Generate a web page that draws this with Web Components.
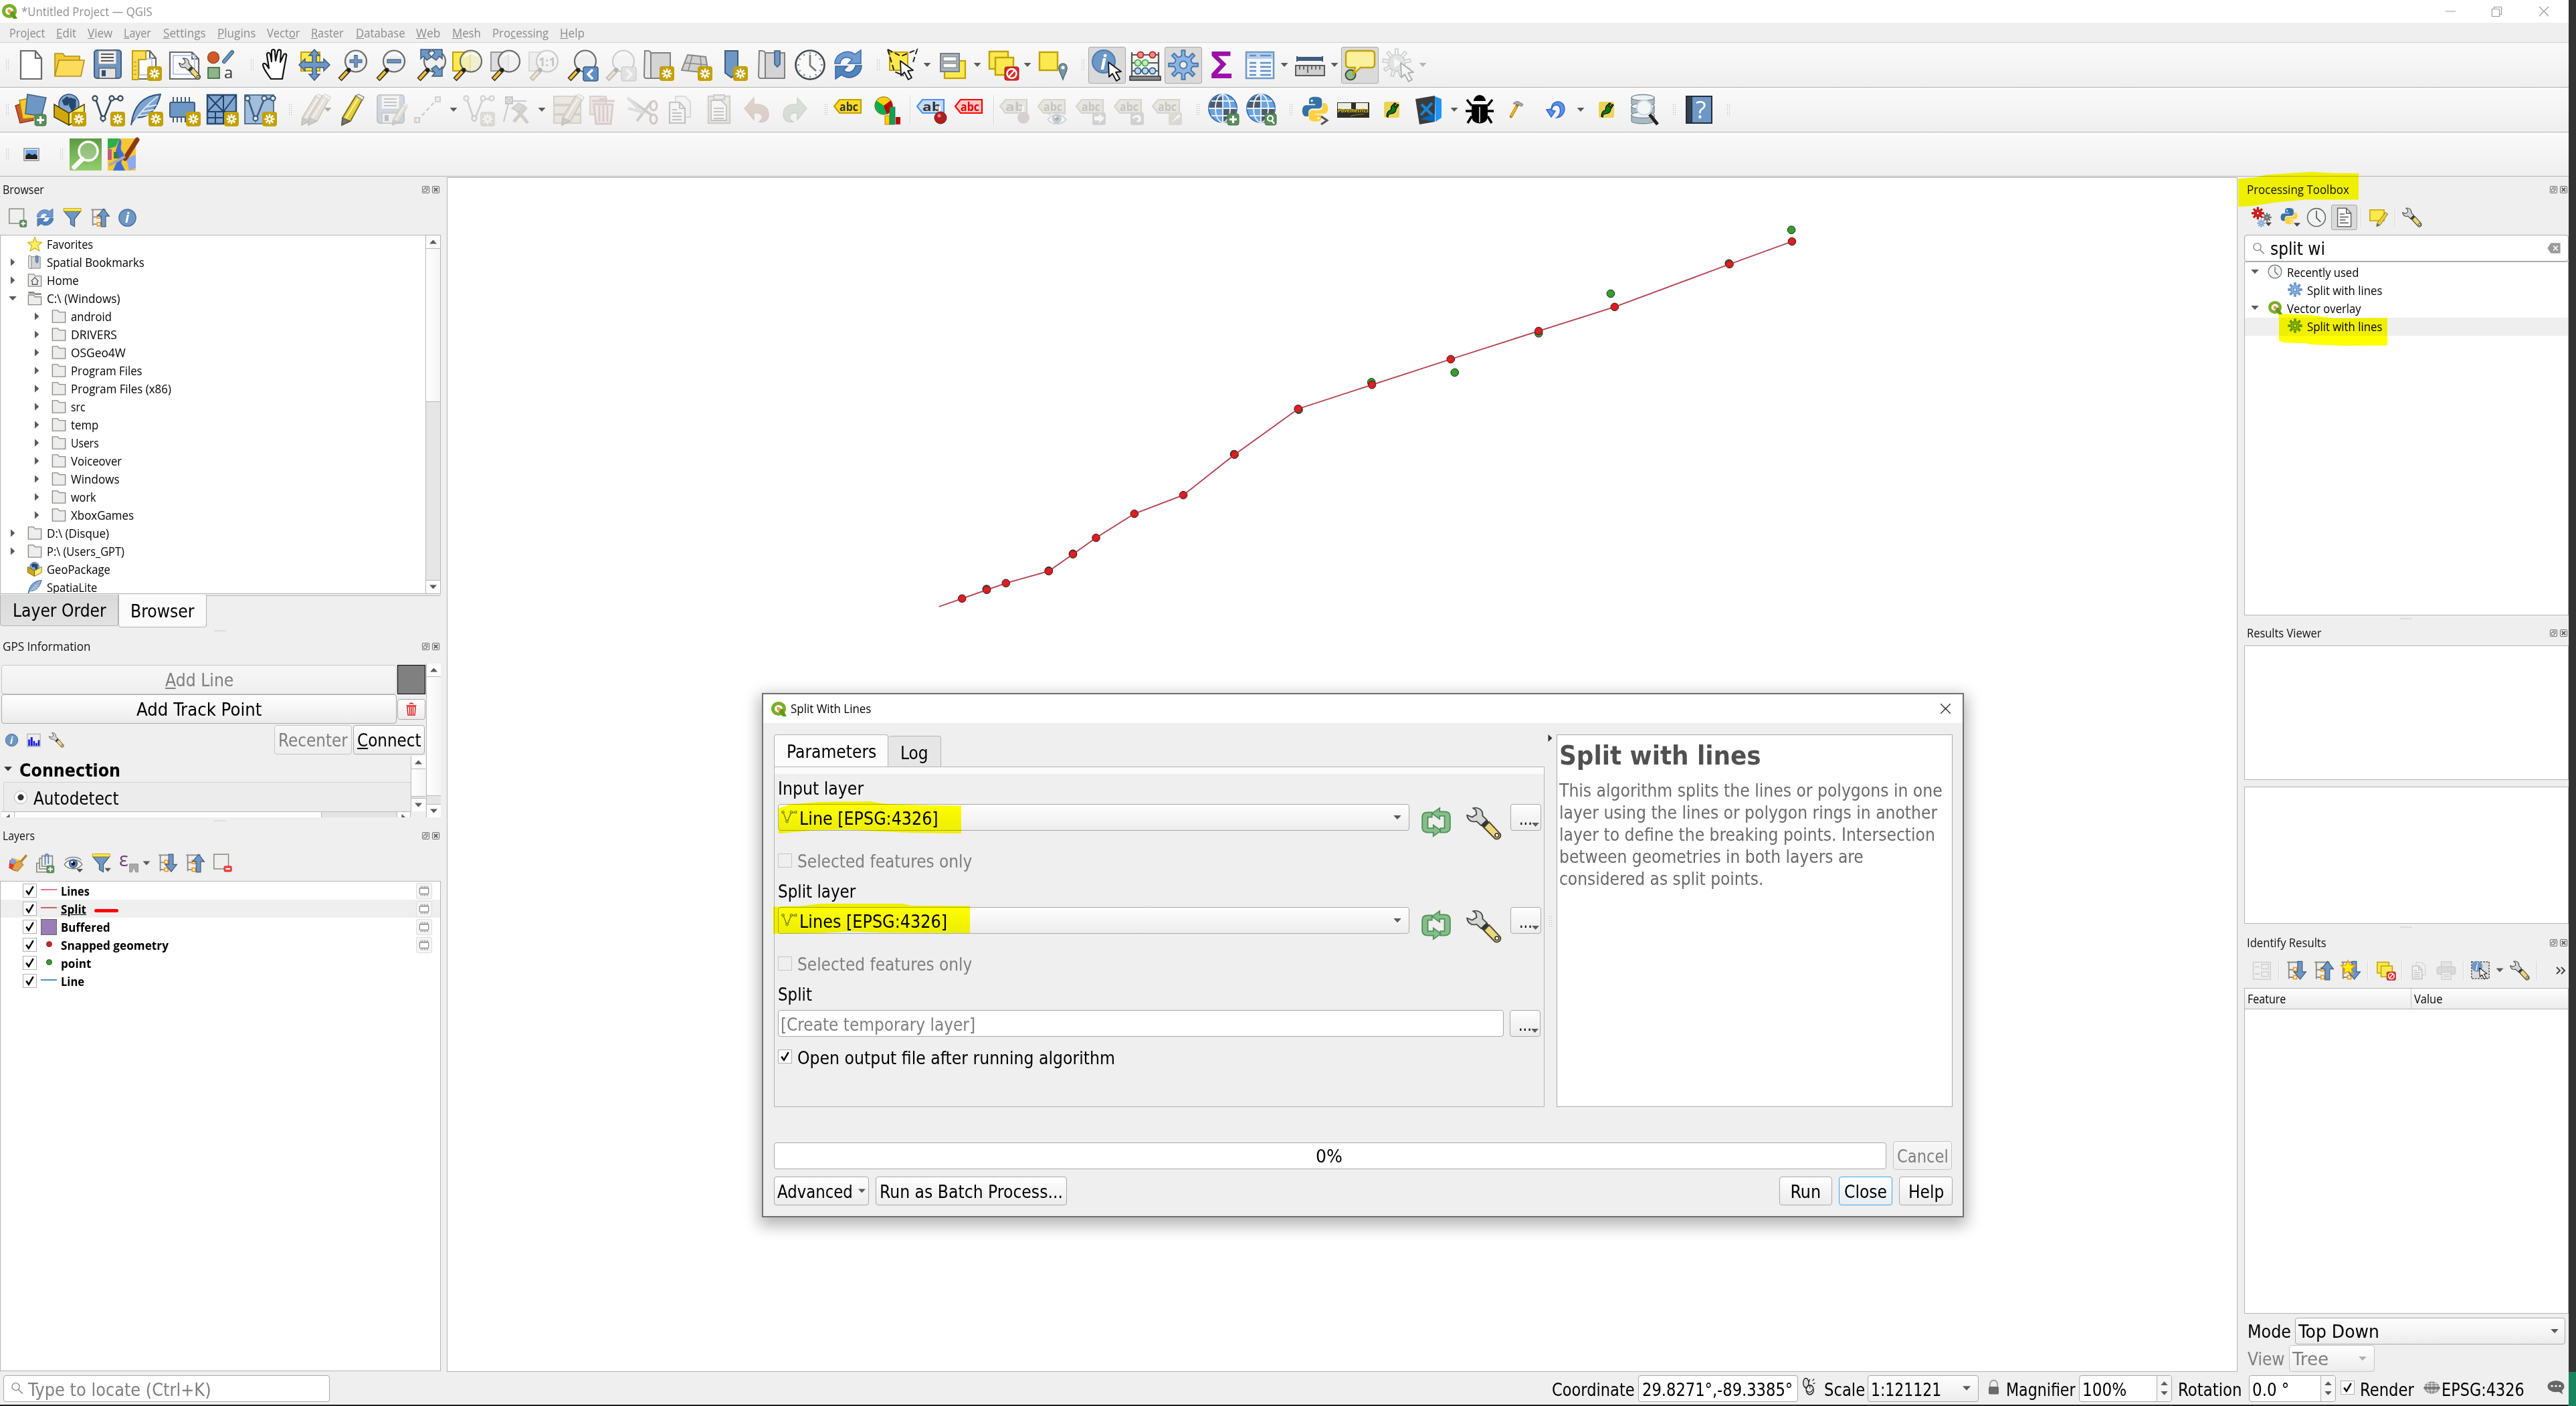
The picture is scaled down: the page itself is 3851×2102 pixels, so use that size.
<!DOCTYPE html>
<html lang="en">
<head>
<meta charset="utf-8">
<title>*Untitled Project — QGIS</title>
<style>
html,body{margin:0;padding:0;background:#efefef;overflow:hidden}
body{width:3851px;height:2102px;font-family:"Open Sans","Noto Sans",sans-serif;color:#000}
</style>
</head>
<body>
<qgis-window></qgis-window>
<script>
/* ---------- icon artwork, drawn on a 48 x 48 grid ---------- */
const P=(d,f='none',s='none',w=2,x='')=>`<path d="${d}" fill="${f}" stroke="${s}" stroke-width="${w}" ${x}/>`;
const R=(x,y,w,h,f='none',s='none',sw=2,rx=0)=>`<rect x="${x}" y="${y}" width="${w}" height="${h}" fill="${f}" stroke="${s}" stroke-width="${sw}" rx="${rx}"/>`;
const C=(x,y,r,f='none',s='none',w=2)=>`<circle cx="${x}" cy="${y}" r="${r}" fill="${f}" stroke="${s}" stroke-width="${w}"/>`;
const T=(t,x,y,s,f,x2='')=>`<text x="${x}" y="${y}" font-size="${s}" fill="${f}" font-family="Open Sans, sans-serif" ${x2}>${t}</text>`;
function gear(cx,cy,r,n,f,s,w=1.5,hole=.25){
  let d='';const a=Math.PI*2/n;
  for(let i=0;i<n;i++){
    const b=i*a-Math.PI/2;
    [[-.36,.6],[-.2,.66],[-.15,1],[.15,1],[.2,.66],[.36,.6]].forEach(([o,k],j)=>{
      d+=(i||j?'L':'M')+(cx+Math.cos(b+o*a)*r*k).toFixed(2)+' '+(cy+Math.sin(b+o*a)*r*k).toFixed(2);
    });
  }
  return P(d+'z',f,s,w,'stroke-linejoin="round"')+C(cx,cy,r*hole,'#eee',s,w);
}
const badge=(x=26,y=26,c='#c4a000')=>R(x,y,22,22,c,'none',0,4)+[0,45,90,135].map(a=>`<path d="M${x+11} ${y+3.5}v15" stroke="#fff" stroke-width="2.6" transform="rotate(${a} ${x+11} ${y+11})"/>`).join('')+C(x+11,y+11,2,c);
const plus=(x=30,y=31,s=17)=>R(x,y,s,s,'#5a8f5a','#427042',1,3)+P(`M${x+s/2} ${y+3}v${s-6}M${x+3} ${y+s/2}h${s-6}`,'none','#fff',3.2);
const lens=(f='#efefef')=>C(29,18.5,16,f,'#6a6a6a',2.2)+P('M19 31L5 46','none','#333',7)+P('M16 34L6 45','none','#fcc22f',4)+C(18.5,31.5,3,'#222')+P('M19 12c4-6 14-7 20-1','none','#fff',3,'opacity=".8"');
const cursor=(x,y,k=1)=>`<path transform="translate(${x} ${y}) scale(${k})" d="M0 0l1 22 5-5 6 11 5-3-6-10 8-1z" fill="#fff" stroke="#111" stroke-width="1.8" stroke-linejoin="round"/>`;
const refresh=P('M4 22C4 8 22-1 34 8l9-6v20H24l6-6c-8-6-17-3-18 6z','#6e9bd1','#3b6da8',1.5)+P('M44 25c0 15-18 23-30 14l-9 6V26h18l-6 6c8 6 16 2 18-7z','#5183c0','#34659f',1.5);
const infoC=C(24,24,21,'#6d97c4','#3e6594',2)+T('i',18,37,34,'#fff','font-style="italic" font-family="Liberation Serif" font-weight="bold"');
const wrench=P('M9 2c8-2 14 3 13 11l6 6-8 8-6-6C7 23 2 19 1 12l7 3 6-4-1-6z','#d3d7d3','#4a4a4a',1.8,'stroke-linejoin="round"')+P('M20 27l8-8 3 3-8 8z','#333')+P('M24 30l7-8 15 17c2 5-3 9-7 7z','#ecd77c','#4a4530',1.8)+C(41.5,41,2.6,'#fff','#333',1.5);
const page=(f='#fff')=>P('M8 3h22l9 11v31H8z',f,'#666',2.2)+P('M30 3v11h9','none','#666',2.2);
const vline=(c='#34495e')=>P('M6 8L17 40L30 8H42','none',c,2.6)+[[5,7],[17,37],[30,7],[43,7]].map(p=>C(p[0],p[1],3.6,'#efefef',c,2.2)).join('');
const feather=P('M2 47C5 20 18 3 46 1 42 18 32 36 11 36 7 38 4 42 2 47z','#7da3d0','#2d4f77',1.8)+P('M4 45C14 30 26 16 42 4M14 33l17-2M18 27l18-3M24 20l16-3','none','#dce8f5',1.8);
const earth=(x,y,r)=>C(x,y,r,'#86a9d2','#2b4f7c',1.5)+P(`M${x-r*.7} ${y-r*.4}l${r*.5}-${r*.4} ${r*.4} ${r*.3}-${r*.3} ${r*.6}-${r*.4} 0zM${x+r*.1} ${y-r*.7}l${r*.6} ${r*.2} 0 ${r*.8}-${r*.4} ${r*.4}-${r*.3}-${r*.6}z`,'#24466f');
const gpkg=earth(23,16,15)+P('M1 16L23 29V47L1 35z','#d1a70c','#4a3c00',1.5)+P('M23 29L46 16V35L23 47z','#fdf06a','#4a3c00',1.5);
const pencil=(x=0,y=0,c='#e7cf3a')=>`<g transform="translate(${x} ${y})">`+P('M8 36L28 3l10 5-18 33-13 6z',c,'#7a6c1a',1.8)+P('M28 3l4-2 8 4-2 5z','#eee','#888',1.3)+P('M8 36l11 5-12 6z','#777','#444',1)+P('M31 8L13 37','none','#fff7a0',2)+'</g>';
const globe=C(24,22,21,'#6aa3e0','#3a71b3',2)+P('M14 5h9v17H4c0-8 4-13 10-17zM25 23h19c-1 9-5 14-11 18l-8 1z','#444','none',0,'opacity=".75"')+P('M3 22h42M24 1v42M7 11h34M7 33h34','none','#e8f0f8',2)+`<ellipse cx="24" cy="22" rx="11" ry="21" fill="none" stroke="#e8f0f8" stroke-width="2"/>`;
const tag=(t,f,s,c)=>P('M11 9H43V29H11L3 19z',f,s,2.2)+T(t,11,26,18,c,'font-weight="bold" textLength="28" lengthAdjust="spacingAndGlyphs"');
const tree=P('M2 4H38M6 4V44M6 22h10M6 40h10','none','#8a8a85',3)+R(17,17,8,8,'#fff','#f79a1c',3)+R(17,36,8,8,'#fff','#f79a1c',3);
const up=P('M27 46V20h-9L33 2l14 18h-9V46z','#6d97c4','#3e5c7e',2);
const down=P('M27 2V27h-9L33 45l14-18h-9V2z','#6d97c4','#3e5c7e',2);
const funnel=P('M3 8H44L29 27V46L19 40V27z','#6d97c4','#3e5c7e',2)+R(2,1,43,7,'#fce94f','#c4a000',1.5);
const eye=P('M2 27C12 13 36 11 46 27 36 41 12 41 2 27z','#fff','#777',2.4)+C(24,25,10,'#5d8bc4','#31527c',2)+C(24,25,5,'#111')+C(21,21,2.5,'#fff')+P('M4 16C14 7 34 7 44 16','none','#888',2.4);
const clock=C(24,24,21.5,'#f2f4f4','#6a6a6a',2.6)+P('M24 8V25l10 10','none','#555',2.6);
const py=P('M23 2c-8 0-10 3-10 7v6h11v2H8c-5 0-7 5-7 10s2 10 7 10h4v-7c0-4 3-7 8-7h10c4 0 6-3 6-6V9c0-5-4-7-13-7z','#3673a5')+P('M25 46c8 0 10-3 10-7v-5H24v-2h16c5 0 7-5 7-9s-2-10-7-10h-3v7c0 4-3 6-7 6H19c-4 0-6 3-6 6v8c0 4 4 6 12 6z','#ffd13f')+C(18,9,2,'#fff')+C(30,40,2,'#fff');
const qlogo=P('M24 2a22 21 0 1 0 0 42 22 21 0 1 0 0-42zm0 10a12 11 0 1 1 0 22 12 11 0 1 1 0-22z','#7aae2b','none',0,'fill-rule="evenodd"')+P('M26 24l9-1 13 23H36L25 32z','#5f9a1d')+P('M19 17l10 3 1 8-7 3-4-6z','#f59a3c');
const fold=P('M3 4H20l5 6H45V44H3z','#ededed','#8a8a85',3);
const mapscroll=P('M12 6H42V44H8','#d4d4d4','#808080',2)+P('M4 3h5q4 0 4 5V44H6q-3 0-3-4z','#e8e8e8','#808080',2);
const note2=R(3,4,28,26,'#fce94f','#c4a000',2.4)+R(12,13,27,26,'#fce94f','#c4a000',2.4);
const noent=R(26,27,21,20,'#d92b2b','#a11',1,3)+C(36.5,37,7,'none','#fff',2.5)+P('M32 42l9-10','none','#fff',2.5);
const disk=R(4,2,40,42,'#6d97c4','#3e5c7e',2,4)+R(10,3,27,20,'#efefef','#888',1)+P('M14 8h19M14 13h19M14 18h19','none','#555',2.2)+R(11,29,25,15,'#e3e3e3','#555',1.2)+R(15,32,6,9,'#2f4f7a');
const plug=R(13,12,23,24,'#ecd457','none',0,3)+P('M17 34c0-6 3-9 6-9l1-6 5-5 2 1-3 4 2 1 3-4 2 1-4 6c0 5-4 7-7 7-3 0-5 1-5 5z','#0d7a1c','#000',1.2);
const I={
 none:'',page:page(),
 folder:P('M2 41V7h12l3 4h22v7','#f2c935','#b08d17',1.6)+P('M8 17H46l-5 24H2z','#fddc5b','#b08d17',1.6),
 save:disk,
 newlayout:page()+R(14,15,19,24,'none','#b7c9f5',2)+P('M4 3H24V16H13V46H4z','#fbdc55','#c4a000',2)+P('M6 20h4M6 26h4M6 32h4M6 38h4','none','#c4a000',1.6)+badge(),
 layouts:P('M3 5H36L46 15V45H3z','#fff','#666',2.2)+P('M36 5v10h10','none','#666',2)+R(8,10,32,28,'none','#b7c9f5',2)+`<g transform="translate(16 13) scale(.7)">${wrench}</g>`,
 style:C(10,13,8.5,'#d2592b','#a4451f',1.5)+P('M26 19L38 5','none','#3e5c7e',6,'stroke-linecap="round"')+P('M26 19L38 5','none','#6d97c4',3.5,'stroke-linecap="round"')+R(2,28,17,16,'#8db58d','#427042',1.8)+T('a',26,44,24,'#333'),
 hand:P('M14 45C9 37 3 31 2 24c0-3 4-3 6 1l3 4L8 9c0-4 4-4 5-1l2 11L15 4c0-4 5-4 5 0l1 14L24 4c1-4 5-3 5 0l-1 16 5-11c2-3 5-1 4 2L33 33l-2 12z','#fff','#111',2.2,'stroke-linejoin="round"'),
 pan:R(4,5,28,28,'#fce94f','#c4a000',2)+P('M24 1l8 9h-5v10h11v-5l9 9-9 9v-5H27v10h5l-8 9-8-9h5V28H10v5l-9-9 9-9v5h11V10h-5z','#6d97c4','#3e5c7e',1.5),
 zin:lens()+P('M29 9v19M19.500 18.500h19','none','#3e5c7e',5.500)+P('M29 10v17M20.500 18.500h17','none','#6d97c4',3.500),
 zout:lens()+R(19,16,20,5,'#6d97c4','#3e5c7e',1.2),
 zfull:lens()+[[0,0,1,1],[48,0,-1,1],[48,42,-1,-1]].map(a=>`<g transform="translate(${a[0]} ${a[1]}) scale(${a[2]} ${a[3]})">${P('M8 1H23L19 6l5 6-7 5-5-6-4 4z','#6d97c4','#3e5c7e',1.5)}</g>`).join(''),
 zsel:R(2,5,26,28,'#fce94f','#c4a000',2)+lens('rgba(240,238,200,.8)'),
 zlayer:R(2,5,26,28,'#ddd','#999',2)+lens('rgba(240,240,240,.8)'),
 znat:R(2,5,22,28,'#ddd','#999',2)+lens()+T('1:1',16,26,18,'#555','font-weight="bold"'),
 zlast:lens()+R(26,27,22,21,'#5f8fc4','#3e5c7e',1.5,3)+P('M40 31l-7 7 7 7','none','#fff',3.5),
 znext:lens()+R(26,27,22,21,'#bbb','#888',1.5,3)+P('M34 31l7 7-7 7','none','#fff',3.5),
 newmap:mapscroll+badge(),
 new3d:P('M11 9L38 12 42 36 2 32z','#cfcfcf','#888',2)+P('M18 10l-6 22M30 11l2 24M7 21l33 3','none','#888',1.5)+badge(),
 bookmark:P('M8 3H27V36L17.500 43 8 36z','#6d97c4','#3e5c7e',2)+badge(20),
 bookmarks:mapscroll+P('M27 3h8v20l-4 4-4-4z','#6d97c4','#3e5c7e',1.6),
 clock:C(24,24,21.5,'#fafbf8','#44484a',2.6)+[...Array(12)].map((_,i)=>`<path d="M24 5v3" stroke="#6d97c4" stroke-width="2" transform="rotate(${i*30} 24 24)"/>`).join('')+P('M24 9V25l9 8','none','#777',2.6),
 clockg:clock,refresh,
 selpoly:P('M5 5H32V32H5z','#fce94f','#c4a000',2)+P('M2 1l20 10L46 1 40 20M2 1L12 34l14 6','none','#222',2,'stroke-dasharray="8 4"')+cursor(21,18),
 selform:R(11,18,31,26,'#fce94f','#c4a000',2.200)+R(5,7,28,27,'#aab2bb','#777f88',2)+R(9,12,20,6,'#fff','#777',1)+R(9,22,20,6,'#fff','#777',1),
 desel:note2+noent,selloc:R(3,5,27,27,'#fce94f','#c4a000',2.4)+P('M38 46c-3-9-7-14-6-18a6 6 0 0 1 12 0c1 4-3 9-6 18z','#7a96a5','#546e7a',1.5)+C(38,28,2.5,'#fff'),
 identify:C(19,19,17,'#6d97c4','#4f7cb0',2)+T('i',14,31,30,'#fff','font-style="italic" font-family="Liberation Serif" font-weight="bold"')+cursor(26,20),
 abacus:P('M4 5V42M44 5V42M4 9H44M4 21H44M4 33H44','none','#555',2.2)+R(1,41,46,6,'#888','#333',1.5)+[[17,9,'#ef8a8a','#b22'],[35,9,'#ef8a8a','#b22'],[13,21,'#c3ecc3','#4a4'],[24,21,'#c3ecc3','#4a4'],[13,33,'#b7dcf2','#357'],[24,33,'#b7dcf2','#357'],[35,33,'#b7dcf2','#357']].map(a=>C(a[0],a[1],4.6,a[2],a[3],1.8)).join(''),
 gear:gear(24,24,22,8,'#8db4e2','#4477b3',2),
 sigma:T('Σ',6,44,56,'#9b10a8','font-family="Liberation Serif" font-weight="bold" textLength="34" lengthAdjust="spacingAndGlyphs"'),
 table:R(3,5,41,39,'#f3f7fb','#6d97c4',2.500)+R(4,6,39,9,'#b7d0ec')+P('M8 10h10M24 10h16M8 21h10M24 21h16M8 27h10M24 27h16M8 33h10M24 33h16M8 39h10M24 39h16','none','#5f8fc8',2.600),
 measure:P('M5 11v8M43 11v8','none','#34526f',2)+R(5,12,38,6,'#3e5c7e')+R(3,25,43,15,'#cfcfcf','#5a5a5a',2)+P('M9 25v6M15 25v6M21 25v11M27 25v6M33 25v6M39 25v6','none','#5a5a5a',1.8),
 tip:C(10,39,7.5,'#8cc08c','#444',2)+P('M8 3H41q5 0 5 5V23q0 5-5 5H25L14 38 17 28H8q-5 0-5-5V8q0-5 5-5z','#fbf09b','#c4a000',2.4),
 gearplay:gear(21,21,21,9,'#fff','#777',1.8)+C(21,21,12,'#b5bcc2','#888',1.5)+P('M17 14l11 7-11 7z','#fff')+cursor(27,21),
 opends:P('M1 18L20 12 28 40 8 44z','#d2592b','#8a3a1c',1.5)+P('M7 10L26 6 32 36 12 38z','#f2ca30','#a88510',1.500)+P('M19 1L47 6 40 34 16 30z','#6d97c4','#3e5c7e',1.5)+plus(30,31),
 gpkg:gpkg+badge(27,27),gpkgs:gpkg,newshp:vline()+badge(28,27),feather,newspl:feather+badge(28,27),
 mem:P('M8 5v38M14 5v38M20 5v38M26 5v38M32 5v38','none','#3e5c7e',2)+R(3,13,37,22,'#6d97c4','#3e5c7e',2,2)+badge(27,27),
 mesh:R(2,2,43,43,'#7fa5d0','#2b4a70',2.5)+P('M2 27H45M26 2V45M2 2L26 27M26 2L2 27M45 2L26 27M14 27V45M2 36H26','none','#20406a',2)+badge(27,27),
 gpx:R(1,2,43,43,'#a3bedd','#3e5c7e',1.6)+vline('#3e5c7e')+badge(27,27),
 pencils:pencil(-4,0,'#c9a9a0')+pencil(6,0,'#c9a9a0'),pencil:pencil(1,0),
 saveedit:disk+`<g transform="translate(22 14) scale(.7)">${pencil(0,0,'#c9a9a0')}</g>`,
 dline:P('M8 40L36 10','none','#777',2.5,'stroke-dasharray="6 4"')+R(4,36,7,7,'#ddd','#777',2)+R(35,5,7,7,'#ddd','#777',2),
 addf:vline('#777')+badge(26,27,'#a9a184'),
 vertex:R(5,5,10,10,'#ddd','#555',2)+P('M6 6l8 8M14 6l-8 8M15 11H36M9 15L2 42','none','#666',2)+P('M17 42L36 20M20 22L38 44','none','#8a7f60',5)+P('M14 22l10-8 9 4-8 9z','#999','#666',1.5),
 multi:R(3,4,40,12,'#d5c9a2','#8f8458',2)+R(3,18,40,12,'#d5c9a2','#8f8458',2)+R(3,32,40,12,'#d5c9a2','#8f8458',2)+pencil(8,0,'#c9a9a0'),
 trash:R(3,4,24,27,'#d5c9a2','#8f8458',2)+P('M9 16H37L34 45H12z','#efd5d5','#c26a6a',3)+P('M6 11H40M17 18V42M23 18V42M29 18V42M17 8h12','none','#c26a6a',3),
 cut:P('M4 8L38 32M16 41L38 12','none','#777',4)+P('M2 6L20 24M3 22L26 28','none','#aaa',4)+`<ellipse cx="41" cy="18" rx="5" ry="7" fill="none" stroke="#a55" stroke-width="3"/><ellipse cx="41" cy="38" rx="5" ry="7" fill="none" stroke="#a55" stroke-width="3"/>`,
 copy:P('M16 4H30L38 12V35H16z','#eee','#999',2)+P('M7 13H22L30 22V44H7z','#f6f6f6','#555',2.2)+P('M22 13v9h8M11 24h7M11 29h14M11 34h14M11 39h14','none','#555',2),
 paste:R(7,4,32,40,'#d8cdb8','#8a7a60',2.5)+R(15,2,16,7,'#ccc','#666',2)+P('M11 10H26L34 18V40H11z','#f6f6f6','#555',1.8)+P('M15 22h15M15 27h15M15 32h15M15 37h15','none','#555',2),
 undo:P('M4 22L18 6V16C34 15 40 22 40 32 40 40 32 44 26 42 32 38 34 28 18 29V39z','#c07b5b','#a3684a',1.4),
 redo:P('M40 22L26 6V16C10 15 5 22 5 32 5 40 13 44 20 42 12 38 12 28 26 29V39z','#8fae8f','#6f8f6f',1.4),
 abc:tag('abc','#fbdc1f','#c4a000','#333'),
 diagram:C(18,18,13,'#00b050','#333',0)+P('M18 18V5A13 13 0 0 1 30 13z M18 18L7 10A13 13 0 0 1 18 5z','#ffd000')+P('M18 18l11-8a14 14 0 0 1-6 21z','#c00000')+C(18,18,13.3,'none','#8a6a00',1)+R(20,33,7,13,'#ffd000','#d08000',1)+R(27,20,8,26,'#00a650','#555',.8)+R(36,35,7,11,'#c00000'),
 abpin:tag('ab','#c5dcf7','#4a90f0','#333')+P('M37 18v14','none','#bbb',5)+P('M37 18v14','none','#fff',3)+C(38,36,9,'#b01f1f','#7a1111',1)+C(36,33,2.5,'#e88'),
 abcred:tag('abc','#ffc7c7','#ff0000','#e00'),
 labpin:tag('ab','#c9c49a','#8f8a62','#555')+P('M37 18v14','none','#fff',3)+C(38,36,9,'#a08080'),
 labeye:tag('abc','#c9c49a','#8f8a62','#555')+`<g transform="translate(16 22) scale(.62)">${eye}</g>`,
 labmove:tag('abc','#c9c49a','#8f8a62','#555')+R(27,28,20,19,'#888','none',0,3)+P('M30 34h7v-4l8 7-8 7v-4h-7z','#fff'),
 labrot:tag('abc','#c9c49a','#8f8a62','#555')+R(27,28,20,19,'#888','none',0,3)+P('M40 42c6-6-6-12-9-5M37 33c5 0 5 6 0 9','none','#fff',3),
 labedit:tag('abc','#c9c49a','#8f8a62','#555')+R(27,28,20,19,'#a9a184','none',0,3)+P('M30 44l12-13 3 3z','#fff'),
 globeadd:globe+plus(31,30),globeq:globe+R(30,30,17,17,'#5a8f5a','#427042',1,3)+C(38,37,4,'none','#fff',2.2)+P('M40 40l4 5','none','#fff',2.2),
 python:`<g transform="translate(3 3) scale(.84)">${py}</g>`+P('M32 34l9 6-9 6','none','#555',3),pythons:py,
 pave:R(0,13,48,23,'#2d2d2a')+R(1,14,20,9,'#e8efe0')+R(28,14,18,9,'#f4efe0')+T('Pavemetrics',1,28,9,'#e6c51a','font-weight="bold" font-style="italic" textLength="46" lengthAdjust="spacingAndGlyphs"')+P('M20 34c8-4 16-2 20-4','none','#8a7a22',1.2),
 plug,
 vscode:P('M3 8L32 3V42L9 46z','#3c3c3c')+P('M32 4l10 4V36L33 42z','#2196f3')+P('M12 16L30 34M28 14L11 32','none','#1488d8',4)+P('M10 38L32 30V42z','#0b66b8'),
 bug:P('M15 11a9 9 0 0 1 18 0z','#000')+P('M12 16H36V34c0 14-24 14-24 0z','#000')+P('M24 20V43','none','#fff',1.5)+P('M12 18L5 9M36 18l7-9M12 26H3M36 26h9M12 34L6 44M36 34l6 10','none','#000',3.5),
 hammer:P('M16 34L26 16','none','#a8730c',4.5,'stroke-linecap="round"')+P('M16 34L24 19','none','#f5b31a',3)+P('M19 15c3-4 8-4 10-2l5 3-2 3-7-3z','#aaa','#777',1),
 undoblue:P('M11 24l7 11 6-9-5-1c-1-8 10-11 12-4 2 7-1 12-5 15 9-1 14-10 11-18-4-9-18-8-19 5z','#5b93e6','#2f66c4',1.5),
 db:[6,19,32].map(y=>P(`M6 ${y}V${y+9}C8 ${y+14} 38 ${y+14} 40 ${y+9}V${y}z`,'#a9bac6','#7a8b97',1.3)+`<ellipse cx="23" cy="${y}" rx="17" ry="4.500" fill="#eef3f6" stroke="#7a8b97" stroke-width="1.300"/>`).join('')+C(25,21,11,'#f3f6f8','#cfd8dd',2)+P('M33 31l12 15','none','#222',5),
 help:R(4,3,40,42,'#232b38','none')+R(6,5,7,38,'#324250')+R(14,5,28,38,'#6d97c4')+T('?',19,37,36,'#fff','font-family="Liberation Serif"'),
 pic:R(13,15,22,18,'#fff','#888',1.5)+R(15,17,18,10,'#6aa5e8')+P('M15 31V26l5-4 5 3 4-2 4 3v5z','#222'),
 green:`<defs><linearGradient id="gg" x1="0" y1="0" x2="0" y2="1"><stop offset="0" stop-color="#5d9b43"/><stop offset="1" stop-color="#93cf6e"/></linearGradient></defs>`+R(0,0,48,48,'url(#gg)')+C(28,19,14,'rgba(255,255,255,.25)','#fff',3.5)+P('M19 31L7 43','none','#fff',7,'stroke-linecap="round"'),
 osm:R(0,0,42,48,'#f7c733')+P('M0 0H18L12 12 0 16z','#2fae4a')+P('M18 0c6 6-2 14 4 20 5 5 0 12-2 16L26 48H8L16 30 12 18z','#3f6fd8')+R(0,16,6,16,'#c8587a')+R(9,20,7,10,'#3a7a5a')+P('M28 30l14-6v20l-10 4z','#8fa8ee')+P('M44 2L26 30','none','#8b3a12',7,'stroke-linecap="round"')+P('M26 27L2 40','none','#aaa',4),
 newsq:R(3,2,36,36,'#efefef','#85857f',2.4)+plus(29,30,17),refs:refresh,funnel,funnelv:funnel+P('M32 36h16l-8 9z','#555'),
 coll:tree+up,exp:tree+down,info:infoC,
 star:P('M24 1l6 16 17 1-13 11 5 17-15-9-15 9 5-17L1 18l17-1z','#fdf25c','#c9a40a',2.2),
 bmk:mapscroll+P('M27 3h8v20l-4 4-4-4z','#6d97c4','#3e5c7e',1.6),
 home:P('M3 4H20l5 6H45V44H3z','#ededed','#8a8a85',3)+P('M12 27L24 15 36 27M16 26V38H32V26','none','#444',2.6),
 drive:P('M3 2H20l5 5H45V13H25l-4-4H3z','#8a8a85')+P('M3 13H20l5 6H45V45H3z','#ededed','#8a8a85',3),
 fold,tree,
 chart:R(2,3,44,43,'#ededf2','#999',2)+R(5,22,6,22,'#1a1ae0')+R(13,14,7,30,'#1a1ae0')+R(22,27,6,17,'#1a1ae0')+R(30,34,6,10,'#1a1ae0')+R(38,24,6,20,'#1a1ae0'),
 wrench,
 rtrash:P('M9 16H39L36 46H12z','none','#d00',3)+P('M6 11H42M18 18V44M24 18V44M30 18V44M17 6q7-6 14 0','none','#d00',3),
 brush:P('M4 16l22 6-8 22-16-8z','#e33')+P('M10 10l20 6-4 14-20-6z','#fc3')+P('M9 11l-5 12 14 4 3-10z','#7aa0ee')+P('M16 24l14-6 8 10-14 16-14-4z','#e0a24a','#9a6a20',1.5)+P('M32 20L46 4','none','#b8862a',6),
 group:P('M10 24H3V46H32M16 12H10V38H38V34M16 6H42V32H16z','none','#85857f',2.6)+P('M24 28V6c0-6 8-6 8 0V26','none','#4f7cb0',2.8)+plus(28,30,18),
 eye:eye+P('M32 38h16l-8 9z','#555'),
 eps:T('ε',0,31,48,'#6a3a78','font-family="Liberation Serif"')+P('M26 46V26H47V46H41L37 34H36L32 46z','#aaa','#888',1.5),
 remsq:R(3,2,36,36,'#efefef','#85857f',2.4)+R(28,31,19,14,'#e44','#c22',1,3)+P('M32 38h11','none','#fff',3.4),
 gears:gear(15,14,14,8,'#d22','#b11',2)+gear(37,24,10,8,'#777','#666',1.5)+gear(23,38,9,8,'#8db4e2','#7aa4d8',1.5)+P('M33 36h15l-7.500 9z','#444'),
 pyv:`<g transform="scale(.88)">${py}</g>`+P('M32 37h16l-8 9z','#444'),
 doc:P('M9 2H30L41 14V46H9z','#fff','#666',2.4)+P('M30 2v12h11M14 16h12M14 23h21M14 30h14M14 37h21','none','#555',2.4),
 notep:R(3,6,34,26,'#fce94f','#c4a000',2.4)+P('M20 38L40 12l6 4-18 26-9 4z','#e7cf3a','#8a7a20',1.6)+P('M20 38l7 4-8 4z','#666'),
 qlogo,gearb:gear(24,24,22,8,'#8db4e2','#5f8fc8',3.2),
 form:R(4,4,41,41,'none','#888',2.5)+R(24,9,16,11,'none','#888',2.5)+R(24,27,16,11,'none','#888',2.5)+P('M8 15h11M8 32h11','none','#888',3),
 starexp:tree+down+P('M18 0l5 11 12 1-9 8 3 12-11-6-10 6 2-12L1 12l12-1z','#fff200','#f59a1c',2.5),
 print:R(12,3,24,14,'#ccc','#777',2)+R(2,15,44,18,'#aaa','#777',2,5)+R(13,28,22,17,'#eee','#777',2)+P('M17 34h14M17 39h14','none','#777',2),
 infosel:R(3,3,42,40,'#dcdcdc','#444',2.4).replace('/>',' stroke-dasharray="4 3"/>')+C(16,14,13,'#6d97c4')+T('i',12,24,26,'#fff','font-style="italic" font-family="Liberation Serif"')+cursor(22,18,.95),
 mag:C(19,18,14,'none','#888',3.4)+P('M29 29L45 44','none','#888',4),
 clear:P('M1 24L13 7H47V41H13z','#9a9a9a')+P('M22 16l16 16M38 16L22 32','none','#fff',3.4),
 vl:vline('#6b7075'),
 iter:P('M18 8H12q-8 0-8 8V33q0 8 8 8H20V47L31 38 20 29v5H12V16H18z','#86bd8a','#4f9157',1.8)+P('M30 41H36q8 0 8-8V15q0-8-8-8H29V1L18 10 29 19V14H36V34H30z','#86bd8a','#4f9157',1.8),
 lock:P('M10 22V14a14 13 0 0 1 28 0V22','none','#999',4)+R(5,22,38,25,'#6a6a6a','none',0,4),
 mouse:P('M10 8L40 42M30 4L16 30','none','#222',3)+`<ellipse cx="17" cy="14" rx="9" ry="13" fill="#ddd" stroke="#222" stroke-width="3"/><ellipse cx="30" cy="33" rx="12" ry="13" fill="#eee" stroke="#222" stroke-width="3"/>`+P('M18 34c6 8 16 8 22-4M30 20v9M38 8l6-5M40 16l7-2','none','#222',2.5),
 crs:`<ellipse cx="24" cy="24" rx="22" ry="21" fill="#8c8c8c"/>`+P('M1 18h46M5 10h38M6 34h36M24 4v40M15 4q-8 20 2 40M33 4q8 20-2 40','none','#efefef',1.8)+P('M0 25h48','none','#666',4),
 bubble:`<ellipse cx="24" cy="21" rx="23" ry="19" fill="#666"/>`+P('M26 34l17 13-4-19z','#666')+C(13,20,3,'#fff')+C(24,20,3,'#fff')+C(35,20,3,'#fff'),
 chip:R(8,14,32,20,'#fff','#777',2.6,2)+P('M13 14V6M19 14V6M25 14V6M31 14V6M37 14V6M13 34v8M19 34v8M25 34v8M31 34v8M37 34v8','none','#777',2),
 float:R(2,2,44,44,'none','#707070',4.500,7)+R(19,11,17,17,'none','#707070',4)+R(11,20,17,17,'#efefef','#707070',4),
 close:R(2,2,44,44,'none','#707070',4.500,7)+P('M12 12L36 36M36 12L12 36','none','#606060',8)
};
/* ---------- base class ---------- */
class El extends HTMLElement{
  constructor(){super();this.attachShadow({mode:'open'});}
  a(n,d=''){return this.hasAttribute(n)?this.getAttribute(n):d;}
  connectedCallback(){if(this.done)return;this.done=true;
    this.shadowRoot.innerHTML=`<style>:host{display:block;box-sizing:border-box}*{box-sizing:border-box}${this.css()}</style>${this.html()}`;
    this.after();}
  css(){return''} html(){return'<slot></slot>'} after(){}
}
const def=(n,c)=>customElements.define(n,c);

/* one line of text, set to an exact advance width */
def('fit-text',class extends El{
  css(){const t=this.a('f')==='t';
    return `:host{display:block;flex:none;white-space:nowrap;width:${this.a('w')}px;color:${this.a('c','inherit')};font:${this.hasAttribute('b')?'bold ':''}${this.a('s',t?26.5:18)}px/1.2 ${t?'"DejaVu Sans Condensed","DejaVu Sans"':'"Open Sans","Noto Sans"'},sans-serif;font-stretch:${t?'condensed':'normal'}}
    span{display:inline-block;transform-origin:0 50%}`}
  html(){return'<span><slot></slot></span>'}
  after(){const s=this.shadowRoot.querySelector('span'),n=s.offsetWidth,w=+this.a('w'),dy=this.a('dy',this.a('f')==='t'?1:0);if(n&&w)s.style.transform=`translateY(${dy}px) scaleX(${(w/n).toFixed(4)})`;}
});
const S=(t,w,o='')=>`<fit-text w="${w}" ${o}>${t}</fit-text>`;
const TT=(t,w,o='')=>`<fit-text f="t" w="${w}" ${o}>${t}</fit-text>`;

def('q-icon',class extends El{
  css(){const z=this.a('z',48);return `:host{flex:none;width:${z}px;height:${this.a('h',z)}px;${this.hasAttribute('off')?'opacity:.3;filter:saturate(.55);':''}}svg{display:block;width:100%;height:100%;overflow:visible}`}
  html(){return `<svg viewBox="0 0 48 48" preserveAspectRatio="none">${I[this.a('n')]||''}</svg>`}
});
def('drop-arrow',class extends El{
  css(){const d=this.a('d','down'),z=+this.a('z',12),c=this.a('c','#5a5a5a'),h=z*.55;
    const b={down:`width:${z}px;height:${h}px;clip-path:polygon(0 0,100% 0,50% 100%)`,up:`width:${z}px;height:${h}px;clip-path:polygon(50% 0,100% 100%,0 100%)`,right:`width:${h}px;height:${z}px;clip-path:polygon(0 0,100% 50%,0 100%)`,left:`width:${h}px;height:${z}px;clip-path:polygon(100% 0,100% 100%,0 50%)`}[d];
    return `:host{flex:none;background:${c};${b}}`}
  html(){return''}
});
def('grip-dots',class extends El{
  css(){return this.hasAttribute('row')?':host{height:2px;width:17px;margin:0 auto;background:repeating-linear-gradient(90deg,#bbb 0 1px,transparent 1px 3px)}'
   :':host{flex:none;width:4px;height:17px;background:repeating-linear-gradient(#efefef00 0 1px,#f5f5f5 1px 3px),repeating-linear-gradient(90deg,#aaa 0 1px,transparent 1px 3px)}'}
  html(){return''}
});
/* toolbar: entries are placed one after the other; each keeps its own lead-in gap */
def('tool-bar',class extends El{
  css(){return `:host{flex:none;height:${this.a('h',67)}px}
   .r{display:flex;align-items:center;height:100%}
   .r>*{flex:none}.sep{width:2px;background:#d6d6d6;border-right:1px solid #fcfcfc}
   .on{display:flex;align-items:center;justify-content:center;background:#dadada;border:1px solid #a8a8a8;border-radius:3px}`}
  html(){
    const z=+this.a('z',48),bw=+this.a('bw',56),bh=+this.a('bh',55);let x=+this.a('x0',0);
    return '<div class="r">'+TOOLS[this.a('set')].map(([n,c,o=''])=>{
      const w=n==='|'?4:n==='/'?2:n==='v'?11:o.includes('A')?bw:z;const m=(c-w/2-x).toFixed(1);x=c+w/2;const st=`style="margin-left:${m}px`;
      if(n==='|')return `<grip-dots ${st}"></grip-dots>`;
      if(n==='/')return `<div class="sep" ${st};height:${z===48?43:28}px"></div>`;
      if(n==='v')return `<drop-arrow z="11" c="${o||'#5a5a5a'}" ${st}"></drop-arrow>`;
      const ic=`<q-icon n="${n}" z="${z}" ${o.includes('D')?'off':''}`;
      return o.includes('A')?`<div class="on" ${st};width:${bw}px;height:${bh}px">${ic}></q-icon></div>`:`${ic} ${st}"></q-icon>`;
    }).join('')+'</div>'}
});
const TOOLS={
 main:[['|',11],['page',47],['folder',104],['save',161],['newlayout',218],['layouts',275],['style',333],['|',377],['hand',415],['pan',470],['zin',527],['zout',584],['zfull',645],['zsel',699],['zlayer',756],['znat',813,'D'],['zlast',870],['znext',927,'D'],['newmap',984],['new3d',1041],['bookmark',1100],['bookmarks',1155],['clock',1211],['refresh',1268],['|',1313],['selpoly',1349],['v',1386],['selform',1425],['v',1461],['desel',1500],['v',1536],['selloc',1575],['|',1619],['identify',1655,'A'],['abacus',1712],['gear',1769,'A'],['sigma',1827],['table',1884],['v',1920],['measure',1958],['v',1995],['tip',2033,'A'],['gearplay',2091,'D'],['v',2127,'#b4b4b4']],
 edit:[['|',11],['opends',46],['gpkg',104],['newshp',161],['newspl',218],['mem',275],['mesh',332],['gpx',389],['|',434],['pencils',472,'D'],['v',490,'#aaa'],['pencil',527],['saveedit',584,'D'],['dline',640,'D'],['v',678],['addf',716,'D'],['vertex',775,'D'],['v',810],['multi',849,'D'],['trash',903,'D'],['cut',960,'D'],['copy',1018,'D'],['paste',1076,'D'],['undo',1133,'D'],['redo',1190,'D'],['|',1235],['abc',1268],['diagram',1327],['/',1361],['abpin',1392],['abcred',1449],['/',1486],['labpin',1516,'D'],['labeye',1573,'D'],['labmove',1630,'D'],['labrot',1687,'D'],['labedit',1744,'D'],['|',1791],['globeadd',1828],['globeq',1885],['|',1930],['python',1967],['pave',2023],['plug',2080],['vscode',2137],['v',2174],['bug',2212],['hammer',2267],['undoblue',2325],['v',2363],['plug',2401],['db',2457],['|',2503],['help',2540],['|',2584]],
 plug:[['|',11],['pic',47],['|',92],['green',128],['osm',185]],
 browser:[['newsq',26],['refs',67],['funnel',108],['coll',149],['info',190]],
 layers:[['brush',26],['group',67],['eye',109],['funnelv',151],['eps',192],['v',219],['exp',250],['coll',291],['remsq',332]],
 proc:[['gears',3381],['pyv',3424],['clockg',3463],['doc',3504,'A'],['/',3530],['notep',3556],['/',3581],['wrench',3606]],
 ident:[['form',3381,'D'],['/',3407],['exp',3433],['coll',3474],['starexp',3514],['/',3540],['desel',3567],['/',3591],['copy',3617,'D'],['print',3657,'D'],['/',3683],['infosel',3708],['v',3737],['wrench',3767],['/',3793]]
};
def('dock-title',class extends El{
  css(){return `:host{display:flex;flex:none;align-items:center;height:${this.a('h')}px;padding-left:4px}q-icon{margin-top:-2px}.g{flex:1}q-icon+q-icon{margin:-2px ${this.a('r',11)}px 0 4px}`}
  html(){return S(this.a('t'),this.a('w'),'s="17.500" c="#111" dy="-1"')+'<div class="g"></div><q-icon n="float" z="11"></q-icon><q-icon n="close" z="11"></q-icon>'}
});
def('push-button',class extends El{
  css(){const off=this.hasAttribute('off');return `:host{display:flex;flex:none;align-items:center;justify-content:center;gap:8px;height:${this.a('h',43)}px;width:${this.a('w')}px;border:1.500px solid ${this.hasAttribute('focus')?'#46a6e8':off?'#c6c6c6':'#a9a9a9'};border-radius:4px;background:linear-gradient(${off?'#f7f7f7,#efefef':this.hasAttribute('focus')?'#fdfeff,#e6ecf3':'#fefefe,#ececec'});color:${off?'#7f7f7f':'#000'}}`}
});
def('check-box',class extends El{
  css(){return `:host{flex:none;width:21px;height:21px;border:1.500px solid ${this.hasAttribute('off')?'#c6c6c6':'#b0b0b0'};background:${this.hasAttribute('off')?'#efefef':'#fff'}}svg{display:block;width:100%;height:100%}`}
  html(){return this.hasAttribute('on')?'<svg viewBox="0 0 18 18"><path d="M4 9l3.500 5L14 3" fill="none" stroke="#000" stroke-width="2.400"/></svg>':''}
});
def('scroll-bar',class extends El{
  css(){return `:host{display:flex;flex:none;flex-direction:column;width:22px;border-left:1px solid #b8b8b8;background:#e6e6e6}
  div{display:flex;align-items:center;justify-content:center;flex:none;height:20px;background:#fdfdfd}
  .u{border-bottom:1px solid #b8b8b8}.d{border-top:1px solid #b8b8b8;margin-top:auto}
  .t{height:${this.a('t')}px;border-bottom:1px solid #b8b8b8;background:linear-gradient(90deg,#fff,#f5f5f5)}`}
  html(){return '<div class="u"><drop-arrow d="up" z="11"></drop-arrow></div><div class="t"></div><div class="d"><drop-arrow z="11"></drop-arrow></div>'}
});
def('combo-box',class extends El{
  css(){return `:host{display:flex;align-items:center;flex:none;width:${this.a('w')}px;height:40px;border:1.500px solid ${this.hasAttribute('off')?'#c6c6c6':'#a9a9a9'};border-radius:4px;background:linear-gradient(#fefefe,#ededed);padding:0 ${this.a('r',11)}px 0 4px}.g{flex:1}`}
  html(){return `<slot></slot><div class="g"></div><drop-arrow z="12" c="${this.hasAttribute('off')?'#b0b0b0':'#5a5a5a'}"></drop-arrow>`}
});
def('spin-box',class extends El{
  css(){return `:host{display:flex;flex:none;width:${this.a('w')}px;height:40px;border:1.500px solid #a9a9a9;border-radius:4px;background:#fff;align-items:stretch}
  .t{flex:1;display:flex;align-items:center;padding-left:4px}.b{width:22px;border-left:1px solid #b0b0b0;background:#f6f6f6;display:flex;flex-direction:column;align-items:center;justify-content:space-evenly;border-radius:0 3px 3px 0}`}
  html(){return '<div class="t"><slot></slot></div><div class="b"><drop-arrow d="up" z="11"></drop-arrow><drop-arrow z="11"></drop-arrow></div>'}
});
def('tree-row',class extends El{
  css(){return `:host{display:flex;align-items:center;height:27px;padding-left:${this.a('pl')}px;background:${this.hasAttribute('sel')?'#efefef':'none'}}
  .a{width:14px;display:flex;justify-content:center;margin-right:${this.a('gap',15)}px}q-icon{margin:-3px 7px 0 0}`}
  html(){const d=this.a('arrow');return `<div class="a">${d?`<drop-arrow d="${d}" z="12" style="margin-top:-3px"></drop-arrow>`:''}</div><q-icon n="${this.a('icon')}" z="22"></q-icon>`+S(this.a('t'),this.a('w'),'dy="'+this.a('dy','-1')+'"')}
});
def('browser-tree',class extends El{
  css(){return `:host{display:flex;height:537px;width:659px;border:1px solid #b4b4b4;background:#fff;overflow:hidden}.l{flex:1;padding-top:1px;overflow:hidden}`}
  html(){const rows=[['','star','Favorites',69],['right','bmk','Spatial Bookmarks',146],['right','home','Home',48],['down','drive','C:\\ (Windows)',110],
   ...[['android',61],['DRIVERS',69],['OSGeo4W',82],['Program Files',107],['Program Files (x86)',150],['src',22],['temp',41],['Users',42],['Voiceover',76],['Windows',73],['work',38],['XboxGames',94]].map(r=>['right','fold',r[0],r[1],1]),
   ['right','fold','D:\\ (Disque)',93],['right','fold','P:\\ (Users_GPT)',116],['','gpkgs','GeoPackage',95],['','feather','SpatiaLite',75]];
   return '<div class="l">'+rows.map(r=>`<tree-row arrow="${r[0]}" icon="${r[1]}" t="${r[2]}" w="${r[3]}" pl="${r[4]?47:11}"></tree-row>`).join('')+'</div><scroll-bar t="229"></scroll-bar>'}
});
def('gps-panel',class extends El{
  css(){return `:host{display:flex;height:230px;width:659px;overflow:hidden;padding-left:2px;margin-top:7px}
  .m{width:636px;padding-top:2px}.r{display:flex;align-items:center}.sq{width:42px;height:44px;background:#808080;border:1.500px solid #000;margin-left:1px}
  .i{height:48px;padding-left:5px;gap:12px}.g{flex:1}
  .c{display:flex;height:83px;width:634px}.cl{flex:1}.h{height:39px;gap:11px;padding-left:4px}
  .f{height:44px;margin-left:3px;border-top:1.500px solid #d2d2d2;border-left:1px solid #d2d2d2;background:#ececec;padding-left:15px;gap:9px}
  .rad{width:20px;height:20px;border:1.500px solid #b8b8b8;border-radius:50%;background:radial-gradient(circle,#333 0 4px,#fff 5px)}
  .hs{display:flex;width:612px;height:21px;background:#e4e4e4;border-top:1px solid #b8b8b8}.hs div{background:#fdfdfd;border-right:1px solid #b8b8b8;display:flex;justify-content:center;padding-top:3px}
  .c scroll-bar{height:83px}.o{height:230px}`}
  html(){return `<div class="m">
   <div class="r"><push-button w="591" h="44" off>${TT('<u>A</u>dd Line',102)}</push-button><div class="sq"></div></div>
   <div class="r"><push-button w="591" h="44">${TT('Add Track Point',187)}</push-button><push-button w="42" h="31" style="margin-left:1px"><q-icon n="rtrash" z="20"></q-icon></push-button></div>
   <div class="r i"><q-icon n="info" z="21"></q-icon><q-icon n="chart" z="21"></q-icon><q-icon n="wrench" z="23"></q-icon><div class="g"></div>
     <push-button w="116" h="44" off style="margin-right:-10px">${TT('Recenter',104)}</push-button><push-button w="107" h="44" style="margin-right:2px">${TT('<u>C</u>onnect',96)}</push-button></div>
   <div class="c"><div class="cl"><div class="r h"><drop-arrow z="12" c="#333"></drop-arrow>${TT('Connection',151,'b dy="2"')}</div><div class="r f"><div class="rad"></div>${TT('Autodetect',128,'dy="2"')}</div></div><scroll-bar t="41"></scroll-bar></div>
   <div class="hs"><div style="width:20px"><drop-arrow d="left" z="11"></drop-arrow></div><div style="width:459px"></div><div style="width:21px;margin-left:112px;border-left:1px solid #b8b8b8"><drop-arrow d="right" z="11"></drop-arrow></div></div>
  </div><scroll-bar class="o" t="178"></scroll-bar>`}
});
def('layer-row',class extends El{
  css(){return `:host{display:flex;align-items:center;height:27px;padding:0 12px 0 33px;background:${this.hasAttribute('sel')?'#efefef':'none'}}
  .s{width:24px;height:24px;margin:0 6px;display:flex;align-items:center;justify-content:center}.g{flex:1}
  .m{width:36px;height:5px;border-radius:3px;background:#f00;margin:6px 0 0 12px}
  .chip{width:24px;height:24px;border:1px solid #dcdcdc;border-radius:3px;background:#f5f5f5;display:flex;align-items:center;justify-content:center}`}
  html(){const k=this.a('k'),c=this.a('c');
   const s={line:`width:24px;height:2px;background:${c}`,fill:`width:24px;height:24px;background:${c};border:1px solid #666`,dot:`width:9px;height:9px;border-radius:50%;background:${c};border:1px solid #444`}[k];
   return `<check-box on></check-box><div class="s"><div style="${s};margin-top:${k==='fill'?0:-3}px"></div></div>`+S(this.hasAttribute('sel')?`<u>${this.a('t')}</u>`:this.a('t'),this.a('w'),'b s="17.500" dy="1"')+(this.hasAttribute('sel')?'<div class="m"></div>':'')+'<div class="g"></div>'+(this.hasAttribute('mem')?'<div class="chip"><q-icon n="chip" z="20"></q-icon></div>':'')}
});
def('left-docks',class extends El{
  css(){return `:host{display:flex;flex-direction:column;flex:none;width:668px}
  .tabs{display:flex;height:49px;margin-top:1px;align-items:flex-start;width:659px}
  .t{display:flex;align-items:center;justify-content:center;border:1px solid #b4b4b4;border-top:0;border-radius:0 0 4px 4px}
  .t1{width:177px;height:47px;background:linear-gradient(#dadada,#e2e2e2)}.t2{width:132px;height:49px;background:#fbfbfb}.ln{flex:1;border-top:1.500px solid #b4b4b4;margin-top:1px}
  .sp{height:11px;padding-top:4px;width:659px}
  .list{width:659px;height:733px;border:1px solid #b4b4b4;background:#fff;margin-top:5px}`}
  html(){return `<dock-title h="40" t="Browser" w="62"></dock-title><tool-bar set="browser" z="29" h="42"></tool-bar>
  <browser-tree style="margin-top:5px"></browser-tree>
  <div class="tabs"><div class="t t1">${TT('Layer Order',140)}</div><div class="t t2">${TT('Browser',96)}</div><div class="ln"></div></div>
  <div class="sp"><grip-dots row></grip-dots></div>
  <dock-title h="36" t="GPS Information" w="131"></dock-title>
  <gps-panel></gps-panel>
  <div class="sp" style="height:9px"><grip-dots row></grip-dots></div>
  <dock-title h="38" t="Layers" w="48"></dock-title>
  <tool-bar set="layers" z="29" h="43"></tool-bar>
  <div class="list"><layer-row k="line" c="#e8719a" t="Lines" w="43" mem></layer-row><layer-row k="line" c="#c86464" t="Split" w="38" sel mem></layer-row><layer-row k="fill" c="#987db7" t="Buffered" w="74" mem></layer-row><layer-row k="dot" c="#e31a1c" t="Snapped geometry" w="161" mem></layer-row><layer-row k="dot" c="#33a02c" t="point" w="45"></layer-row><layer-row k="line" c="#4a90c2" t="Line" w="35"></layer-row></div>`}
});
def('map-canvas',class extends El{
  css(){return `:host{flex:1;margin-top:1px;border:1.500px solid #b4b4b4;background:#fff;height:1786px}svg{display:block}`}
  html(){
   const pts=[[1438,894.8],[1475,881.8],[1503.6,871.8],[1567.6,853.9],[1603.8,828.6],[1638.3,804.1],[1695.6,768.1],[1768.8,740.2],[1845.4,679.7],[1940.5,611.2],[2050.8,575.3],[2168.6,537],[2300,494.9],[2413.6,458.9],[2585.3,395],[2678.7,361]];
   const g=[[2677.9,343.7],[2407.7,439],[2174.5,556.9],[2300,498.3],[2050,571.4],[1941.3,612.6],[2584.5,393.8],[1474.6,880.6],[1844.8,679],[1567.6,853.2],[1603.8,827.8]];
   return `<svg width="2674" height="1780" viewBox="668.800 266 2674 1780"><polyline points="1403.500,907 ${pts.join(' ')}" fill="none" stroke="#b5434f" stroke-width="1.800"/>`
   +g.map(p=>C(p[0],p[1],5.8,'#33a02c','#232323',1)).join('')+pts.map(p=>C(p[0],p[1],5.8,'#e31a1c','#232323',1)).join('')
   +`<polyline points="1403.500,907 ${pts.join(' ')}" fill="none" stroke="#b5434f" stroke-width="1.500" opacity=".45"/></svg>`}
});
def('right-docks',class extends El{
  css(){return `:host{display:flex;flex-direction:column;flex:none;width:495px;padding-left:10px}
  .s{display:flex;align-items:center;height:40px;margin-top:5px;border:1.500px solid #a9a9a9;border-radius:4px;background:#fff;padding:0 11px}.g{flex:1}
  .b{border:1px solid #b4b4b4;background:#fff}.sp{height:10px;padding-top:4px}
  .hd{display:flex;height:31px;background:linear-gradient(#fdfdfd,#ececec);border-bottom:1px solid #b4b4b4;align-items:center;padding-left:4px}
  .hd div{width:245px;height:100%;border-right:1px solid #c8c8c8;display:flex;align-items:center;margin-right:4px}
  .m{display:flex;align-items:center;height:40px;padding-left:5px;gap:6px}
  .tb{display:flex;align-items:center}.x{margin-left:27px}`}
  html(){return `<dock-title h="40" t="Processing Toolbox" w="153" r="2"></dock-title>
  <tool-bar set="proc" x0="3355" z="30" h="42" bw="39" bh="38"></tool-bar>
  <div class="s"><q-icon n="mag" z="19" style="margin-right:8px"></q-icon>${TT('split wi',82)}<div class="g"></div><q-icon n="clear" z="20" h="22"></q-icon></div>
  <div class="b" style="height:529px;padding-top:2px">
   <tree-row arrow="down" icon="clockg" t="Recently used" w="107" pl="8" gap="12" dy="0"></tree-row><tree-row arrow="" icon="gearb" t="Split with lines" w="113" pl="38" gap="12" dy="0"></tree-row>
   <tree-row arrow="down" icon="qlogo" t="Vector overlay" w="111" pl="8" gap="12" dy="0"></tree-row><tree-row arrow="" icon="gearb" t="Split with lines" w="113" pl="38" gap="12" sel dy="0"></tree-row></div>
  <div class="sp" style="height:9px"><grip-dots row></grip-dots></div>
  <dock-title h="36" t="Results Viewer" w="111" r="2"></dock-title>
  <div class="b" style="height:201px"></div><div class="b" style="height:205px;margin-top:10px"></div>
  <div class="sp"><grip-dots row></grip-dots></div>
  <dock-title h="38" t="Identify Results" w="119" r="2"></dock-title>
  <div class="tb"><tool-bar set="ident" x0="3355" z="30" h="43"></tool-bar><svg class="x" width="14" height="12" viewBox="0 0 14 12"><path d="M1 1l5 5-5 5M8 1l5 5-5 5" fill="none" stroke="#444" stroke-width="2"/></svg></div>
  <div class="b" style="height:487px;margin-top:5px"><div class="hd"><div>${S('Feature',57,'dy="1"')}</div>${S('Value',42,'dy="1"')}</div></div>
  <div class="m" style="margin-top:6px">${TT('Mode',65)}<combo-box w="404" r="9">${TT('Top Down',121)}</combo-box></div>
  <div class="m" style="margin-top:1px;color:#7f7f7f">${TT('View',56)}<combo-box w="128" off>${TT('Tree',54)}</combo-box></div>`}
});
def('status-bar',class extends El{
  css(){return `:host{display:flex;align-items:center;height:49px;padding-left:5px}
  .e{display:flex;align-items:center;height:40px;border:1.500px solid #a9a9a9;border-radius:4px;background:#fff;padding-left:5px;flex:none}.g{flex:1}`}
  html(){const D='dy="2"';return `<div class="e" style="width:488px;padding-left:10px"><q-icon n="mag" z="19" style="margin-right:7px"></q-icon>${TT('Type to locate (Ctrl+K)',274,'c="#7f7f7f" dy="2"')}</div><div style="flex:none;width:1827px"></div>
  ${TT('Coordinate',124,D)}<div class="e" style="width:239px;margin-left:5px">${TT('29.8271°,-89.3385°',225,D)}</div><q-icon n="mouse" z="22" h="26" style="margin:-6px 0 0 4px"></q-icon>
  ${TT('Scale',61,'dy="2" style="margin-left:13px"')}<combo-box w="166" style="margin-left:4px">${TT('1:121121',105,D)}</combo-box>
  <q-icon n="lock" z="19" h="22" style="margin:-3px 9px 0 13px"></q-icon>${TT('Magnifier',104,D)}<spin-box w="139" style="margin-left:5px">${TT('100%',66,D)}</spin-box>
  ${TT('Rotation',96,'dy="2" style="margin-left:9px"')}<spin-box w="130" style="margin-left:10px">${TT('0.0 °',55,D)}</spin-box><check-box on style="margin:-3px 8px 0 7px"></check-box>${TT('Render',81,D)}
  <q-icon n="crs" z="25" h="21" style="margin:-2px 2px 0 14px"></q-icon>${TT('EPSG:4326',124,D)}<div class="g"></div><q-icon n="bubble" z="26" h="22" style="margin:-3px 6px 0 0"></q-icon>`}
});
def('title-bar',class extends El{
  css(){return `:host{display:flex;align-items:center;height:34px;background:#fff;padding:0 29px 0 2px}.g{flex:1}svg{flex:none;display:block}`}
  html(){return `<q-icon n="qlogo" z="24" style="margin-right:6px"></q-icon>${S('*Untitled Project — QGIS',196,'c="#8f8f8f" dy="1"')}<div class="g"></div>
  <svg width="155" height="16" viewBox="0 0 155 16" fill="none" stroke="#999" stroke-width="1.200"><path d="M0 8h15M69.500 4.500h11v11h-11zM72.500 4.500v-3h11v11h-3M140 1l14 14M154 1l-14 14"/></svg>`}
});
def('menu-bar',class extends El{
  css(){return `:host{display:flex;align-items:center;height:30px;padding-left:13.500px;gap:17.150px;border-bottom:1px solid #d2d2d2;color:#8c8c8c}`}
  html(){return [['Pro<u>j</u>ect',53.5],['<u>E</u>dit',30],['<u>V</u>iew',37],['<u>L</u>ayer',41],['<u>S</u>ettings',64],['<u>P</u>lugins',57],['Vect<u>o</u>r',49.5],['<u>R</u>aster',49],['<u>D</u>atabase',73.5],['<u>W</u>eb',36.5],['<u>M</u>esh',43],['Pro<u>c</u>essing',84],['<u>H</u>elp',37]].map(m=>S(m[0],m[1],'dy="1"')).join('')}
});
def('high-light',class extends El{
  css(){return `:host{position:absolute;left:${this.a('x')}px;top:${this.a('y')}px;width:${this.a('w')}px;height:${this.a('h')}px;mix-blend-mode:multiply;background:#ff0;clip-path:polygon(${this.a('p')})}`}
  html(){return''}
});
def('layer-field',class extends El{
  css(){return `:host{height:154px}.r{display:flex;align-items:center}.l{height:28px}.c{height:41px;margin-top:11px;align-items:flex-start}.o{gap:8px;margin-top:29px;height:28px;color:#7f7f7f}`}
  html(){return `<div class="r l">${TT(this.a('label'),this.a('lw'),'dy="2"')}</div>
  <div class="r c"><combo-box w="944"><q-icon n="vl" z="24" h="22" style="margin-right:3px"></q-icon>${TT(this.a('v'),this.a('vw'),'dy="2"')}</combo-box><q-icon n="iter" z="50" h="44" style="margin:5px 0 0 15px"></q-icon><q-icon n="wrench" z="53" h="50" style="margin:4px 0 0 20px"></q-icon><dots-button style="margin-left:13px"></dots-button></div>
  <div class="r o"><check-box off></check-box>${TT('Selected features only',261,'dy="2"')}</div>`}
});
def('dots-button',class extends El{
  css(){return `:host{display:flex;flex:none}push-button{align-items:flex-end;gap:0}fit-text{margin:0 0 2px 10px}drop-arrow{margin-bottom:5px}`}
  html(){return `<push-button w="46" h="40">${TT('...',20,'style="margin-right:-1px"')}<drop-arrow z="11"></drop-arrow></push-button>`}
});
def('algorithm-dialog',class extends El{
  css(){return `:host{position:absolute;left:1139px;top:1036px;width:1797px;height:784px;border:2px solid #6f6f6f;background:#efefef;box-shadow:0 8px 22px 4px rgba(0,0,0,.3)}
  .tt{display:flex;align-items:center;height:43px;background:#fff;padding:0 18px 0 11px;gap:6px}.g{flex:1}
  .b{display:flex;height:557px;margin:17px 15px 0 16px}
  .p{width:1152px;display:flex;flex-direction:column}
  .tabs{display:flex;height:48px;align-items:flex-end}.t{display:flex;align-items:center;justify-content:center;border:1px solid #b4b4b4;border-bottom:0;border-radius:4px 4px 0 0}
  .t1{width:171px;height:49px;background:#fcfcfc;margin-bottom:-1px}.t2{width:79px;height:46px;background:#e6e6e6;border-left:0;padding-top:2px}
  .f{flex:1;border:1.500px solid #b4b4b4;padding:16px 5px 0 5px;background:linear-gradient(#fbfbfb 0 10px,#efefef 10px)}
  .r{display:flex;align-items:center}.e{display:flex;align-items:center;background:#fff;border:1.500px solid #a9a9a9;border-radius:4px;height:40px;padding-left:3px;color:#7f7f7f}
  .sp{width:18px;display:flex;flex-direction:column;align-items:center;padding:0 1px 0 0}
  .sp grip-dots{margin-top:261px}
  .h{flex:1;border:1px solid #a9a9a9;background:#fff;padding:7px 0 0 3px;color:#6a6a6a}
  .h fit-text{height:32.900px}.f2{margin:51px 15px 0 16px;gap:10px}.f3{margin:10px 15px 0 16px;gap:10px}`}
  html(){return `<div class="tt"><q-icon n="qlogo" z="24"></q-icon>${S('Split With Lines',120,'s="17.500"')}<div class="g"></div><svg width="15" height="15" viewBox="0 0 15 15"><path d="M0 0l15 15M15 0L0 15" stroke="#222" stroke-width="1.300"/></svg></div>
  <div class="b"><div class="p"><div class="tabs"><div class="t t1">${TT('Parameters',134)}</div><div class="t t2">${TT('Log',42)}</div></div>
   <div class="f"><layer-field label="Input layer" lw="128" v="Line [EPSG:4326]" vw="208"></layer-field><layer-field label="Split layer" lw="116" v="Lines [EPSG:4326]" vw="221"></layer-field>
    <div class="r" style="height:28px">${TT('Split',51,'dy="2"')}</div>
    <div class="r" style="margin-top:11px;gap:9px"><div class="e" style="width:1086px">${TT('[Create temporary layer]',291,'dy="2"')}</div><dots-button></dots-button></div>
    <div class="r" style="margin-top:14px;gap:8px"><check-box on></check-box>${TT('Open output file after running algorithm',475,'dy="2"')}</div></div></div>
   <div class="sp"><drop-arrow d="right" z="11" c="#333"></drop-arrow><grip-dots></grip-dots></div>
   <div class="h">${TT('Split with lines',302,'b s="38.500" c="#505050" style="height:59px"')}${TT('This algorithm splits the lines or polygons in one',573)}${TT('layer using the lines or polygon rings in another',565)}${TT('layer to define the breaking points. Intersection',562)}${TT('between geometries in both layers are',455)}${TT('considered as split points.',305)}</div></div>
  <div class="r f2"><div class="e" style="width:1663px;justify-content:center;color:#000;padding:0 3px 0 0">${TT('0%',40)}</div><push-button w="88" off>${TT('Cancel',77)}</push-button></div>
  <div class="r f3"><push-button w="142">${TT('Advanced',113)}<drop-arrow z="11"></drop-arrow></push-button><push-button w="286">${TT('Run as Batch Process...',274)}</push-button><div class="g"></div><push-button w="79">${TT('Run',46)}</push-button><push-button w="80" focus>${TT('Close',64)}</push-button><push-button w="80">${TT('Help',53)}</push-button></div>
  <high-light x="23" y="160" w="273" h="48" p="0 22%,6% 10%,22% 2%,50% 0,58% 8%,77% 12%,100% 14%,100% 100%,72% 98%,50% 92%,38% 88%,20% 90%,0 100%"></high-light>
  <high-light x="15" y="313" w="294" h="45" p="0 10%,14% 8%,24% 0,66% 0,70% 6%,100% 8%,100% 98%,54% 96%,40% 92%,24% 98%,0 100%"></high-light>`}
});
def('qgis-window',class extends El{
  css(){return `:host{display:flex;position:relative;width:3851px;height:2102px;background:#efefef;overflow:hidden}
  .app{width:3840px;display:flex;flex-direction:column;border-bottom:2px solid #201f20}
  .bars{display:flex;flex-direction:column}.bars tool-bar{background:linear-gradient(#fafafa,#efefef);border-bottom:1.500px solid #b4b4b4}
  .mid{display:flex;height:1787px}
  .side{flex:1;display:flex;flex-direction:column;background:#333}.side div{margin-top:auto;height:51px;background:#198560}`}
  html(){return `<div class="app"><title-bar></title-bar><menu-bar></menu-bar><div class="bars"><tool-bar set="main" h="67"></tool-bar><tool-bar set="edit" h="67"></tool-bar><tool-bar set="plug" h="66"></tool-bar></div>
  <div class="mid"><left-docks></left-docks><map-canvas></map-canvas><right-docks></right-docks></div><status-bar></status-bar></div>
  <div class="side"><div></div></div>
  <high-light x="3346" y="257" w="180" h="52" p="0 20%,14% 16%,24% 8%,60% 0,80% 4%,100% 4%,100% 80%,55% 80%,30% 88%,12% 98%,0 100%"></high-light>
  <high-light x="3407" y="469" w="162" h="48" p="0 0,30% 4%,50% 14%,100% 13%,100% 99%,60% 100%,30% 96%,24% 92%,5% 90%,0 84%"></high-light>
  <algorithm-dialog></algorithm-dialog>`}
});
</script>
</body>
</html>
